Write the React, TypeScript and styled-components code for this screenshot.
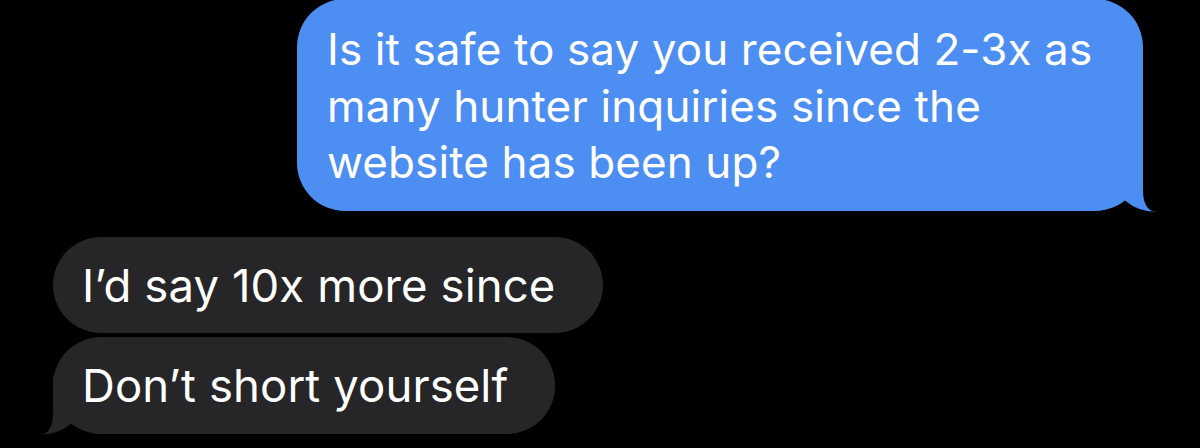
import React from "react";
import styled, { createGlobalStyle } from "styled-components";

const GlobalStyle = createGlobalStyle`
  html, body {
    margin: 0;
    padding: 0;
    background: #000000;
  }
  body {
    width: 1200px;
    height: 448px;
    overflow: hidden;
  }
`;

const Thread = styled.div`
  display: flex;
  flex-direction: column;
  width: 1200px;
  height: 448px;
  background: #000000;
  font-family: "Inter", "Liberation Sans", sans-serif;
  line-height: 56.5px;
  color: #ffffff;
  overflow: hidden;
`;

const Group = styled.div<{ $mine?: boolean }>`
  display: flex;
  flex-direction: column;
  align-items: ${(p) => (p.$mine ? "flex-end" : "flex-start")};
  gap: 4px;
  margin: ${(p) => (p.$mine ? "-1px 57px 0 0" : "26px 0 0 53px")};
`;

const Bubble = styled.div<{ $mine?: boolean }>`
  position: relative;
  box-sizing: border-box;
  background: ${(p) => (p.$mine ? "#4c8ef1" : "#262628")};
  border-radius: 48px;
  font-size: ${(p) => (p.$mine ? "44px" : "45.5px")};
  padding: ${(p) => (p.$mine ? "22px 40px 20px 30px" : "21px 47px 19px 29px")};
  width: ${(p) => (p.$mine ? "846px" : "auto")};
  white-space: nowrap;
  letter-spacing: 0.1px;
`;

const TailSvg = styled.svg<{ $mine?: boolean }>`
  position: absolute;
  bottom: -1px;
  ${(p) => (p.$mine ? "right: -15px;" : "left: -15px;")}
  width: 40px;
  height: 60px;
  overflow: visible;
`;

function Tail({ mine, color }: { mine?: boolean; color: string }) {
  const d = mine
    ? "M7 48.5 L25 0 L25 38 Q25 60 40 60 Q20 60 7 48.5 Z"
    : "M33 48.5 L15 0 L15 38 Q15 60 0 60 Q20 60 33 48.5 Z";
  return (
    <TailSvg $mine={mine} viewBox="0 0 40 60" aria-hidden="true">
      <path d={d} fill={color} />
    </TailSvg>
  );
}

export default function App() {
  return (
    <>
      <GlobalStyle />
      <Thread>
        <Group $mine>
          <Bubble $mine>
            Is it safe to say you received 2-3x as
            <br />
            many hunter inquiries since the
            <br />
            website has been up?
            <Tail mine color="#4c8ef1" />
          </Bubble>
        </Group>
        <Group>
          <Bubble>I’d say 10x more since</Bubble>
          <Bubble>
            Don’t short yourself
            <Tail color="#262628" />
          </Bubble>
        </Group>
      </Thread>
    </>
  );
}
